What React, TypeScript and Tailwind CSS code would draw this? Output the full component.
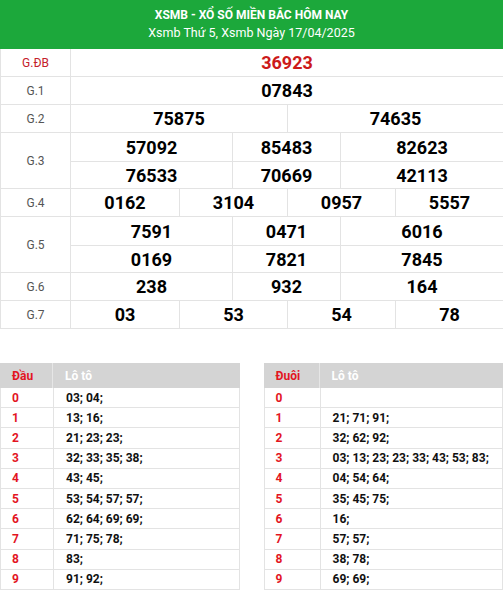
import React from 'react';

type Prize = { label: string; rows: string[][]; cols: string; red?: boolean };

const prizes: Prize[] = [
  { label: 'G.ĐB', rows: [['36923']], cols: 'grid-cols-1', red: true },
  { label: 'G.1', rows: [['07843']], cols: 'grid-cols-1' },
  { label: 'G.2', rows: [['75875', '74635']], cols: 'grid-cols-2' },
  { label: 'G.3', rows: [['57092', '85483', '82623'], ['76533', '70669', '42113']], cols: 'grid-cols-[161px_108px_1fr]' },
  { label: 'G.4', rows: [['0162', '3104', '0957', '5557']], cols: 'grid-cols-4' },
  { label: 'G.5', rows: [['7591', '0471', '6016'], ['0169', '7821', '7845']], cols: 'grid-cols-[161px_108px_1fr]' },
  { label: 'G.6', rows: [['238', '932', '164']], cols: 'grid-cols-[161px_108px_1fr]' },
  { label: 'G.7', rows: [['03', '53', '54', '78']], cols: 'grid-cols-4' },
];

const dau = ['03; 04;', '13; 16;', '21; 23; 23;', '32; 33; 35; 38;', '43; 45;', '53; 54; 57; 57;', '62; 64; 69; 69;', '71; 75; 78;', '83;', '91; 92;'];
const duoi = ['', '21; 71; 91;', '32; 62; 92;', '03; 13; 23; 23; 33; 43; 53; 83;', '04; 54; 64;', '35; 45; 75;', '16;', '57; 57;', '38; 78;', '69; 69;'];

function LotoTable({ title, items, first }: { title: string; items: string[]; first: string }) {
  return (
    <div className="w-[240px] text-[12px] font-bold">
      <div className="flex h-[25px] bg-[#d4d4d4]">
        <div className={`${first} pl-[12px] flex items-center text-[#e3151f] border-r border-[#e6e6e6]`}>{title}</div>
        <div className="flex-1 pl-[12px] flex items-center text-white">Lô tô</div>
      </div>
      {items.map((v, i) => (
        <div key={i} className="flex h-[20.2px] border-b border-l border-r border-[#e3e3e3]">
          <div className={`${first} pl-[11px] flex items-center text-[#e3151f] border-r border-[#e3e3e3]`}>{i}</div>
          <div className="flex-1 pl-[12px] flex items-center text-[#111]">{v}</div>
        </div>
      ))}
    </div>
  );
}

export default function App() {
  return (
    <div className="w-[503px] h-[597px] overflow-hidden bg-white font-['Roboto',sans-serif]">
      <div className="h-[49px] bg-[#1ca83b] flex flex-col items-center text-white">
        <div className="mt-[7px] text-[12px] font-bold leading-[16px]">XSMB - XỔ SỐ MIỀN BẮC HÔM NAY</div>
        <div className="mt-[2px] text-[12.5px] leading-[16px]">Xsmb Thứ 5, Xsmb Ngày 17/04/2025</div>
      </div>

      <div className="border-l border-[#e3e3e3]">
        {prizes.map((p) => (
          <div key={p.label} className="flex border-b border-[#e3e3e3]">
            <div className={`w-[70px] shrink-0 border-r border-[#e3e3e3] flex items-center justify-center text-[12px] ${p.red ? 'text-[#c4202a]' : 'text-[#555]'}`}>
              {p.label}
            </div>
            <div className="flex-1">
              {p.rows.map((r, ri) => (
                <div
                  key={ri}
                  className={`grid ${p.cols} ${ri === 0 && p.rows.length > 1 ? 'h-[28px]' : 'h-[27px]'} ${ri > 0 ? 'border-t border-[#e3e3e3]' : ''}`}
                >
                  {r.map((n, ci) => (
                    <div
                      key={ci}
                      className={`flex items-center justify-center text-[18px] font-bold ${ci > 0 ? 'border-l border-[#e3e3e3]' : ''} ${p.red ? 'text-[#cc1a1a]' : 'text-black'}`}
                    >
                      {n}
                    </div>
                  ))}
                </div>
              ))}
            </div>
          </div>
        ))}
      </div>

      <div className="mt-[34px] flex gap-[24px]">
        <LotoTable title="Đầu" items={dau} first="w-[53px]" />
        <LotoTable title="Đuôi" items={duoi} first="w-[56px]" />
      </div>
    </div>
  );
}
